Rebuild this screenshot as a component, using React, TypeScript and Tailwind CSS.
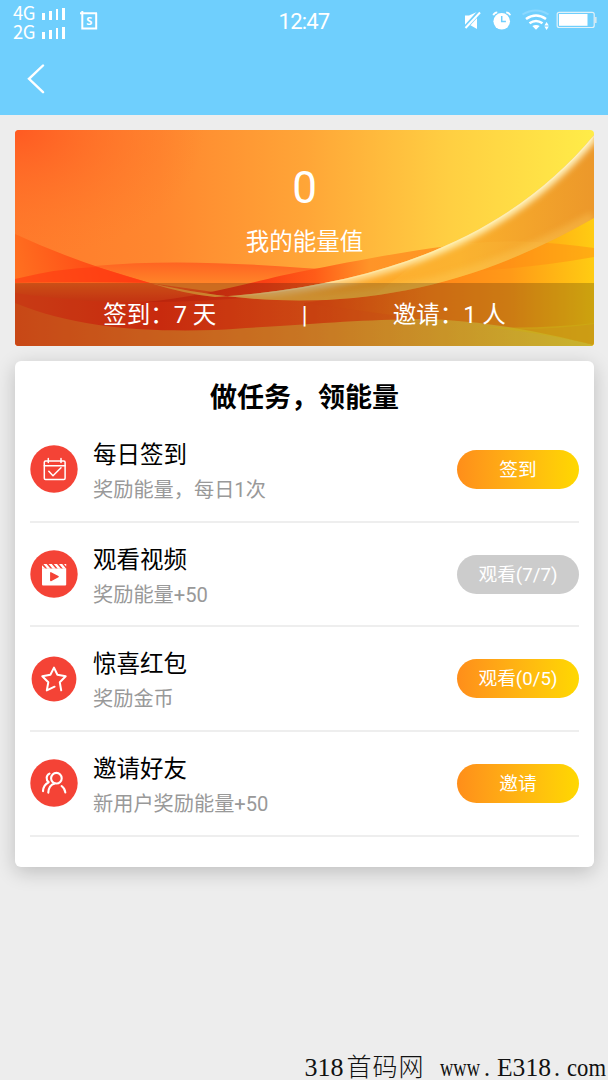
import type { ReactNode } from 'react';

const tasks = [
  { id: 'sign', title: '每日签到', desc: '奖励能量，每日1次', action: '签到', done: false, icon: <CalendarIcon /> },
  { id: 'video', title: '观看视频', desc: '奖励能量+50', action: '观看(7/7)', done: true, icon: <VideoIcon /> },
  { id: 'gift', title: '惊喜红包', desc: '奖励金币', action: '观看(0/5)', done: false, icon: <StarIcon /> },
  { id: 'invite', title: '邀请好友', desc: '新用户奖励能量+50', action: '邀请', done: false, icon: <FriendsIcon /> },
];

function IconCircle({ r = 23.7, children }: { r?: number; children: ReactNode }) {
  return (
    <svg viewBox="0 0 48 48" className="w-12 h-12 shrink-0" fill="none" stroke="#fff" strokeLinecap="round" strokeLinejoin="round">
      <circle cx="24" cy="24" r={r} fill="#f44336" stroke="none" />
      {children}
    </svg>
  );
}

function CalendarIcon() {
  return (
    <IconCircle>
      <g strokeWidth="1.5">
        <rect x="14.3" y="16" width="20.8" height="18.4" rx="1.2" />
        <path d="M14.3 20.8h20.8M18.3 13.5v4M31 13.5v4" />
        <path d="M18.8 26.2l4.2 4.5 8-8" />
      </g>
    </IconCircle>
  );
}

function VideoIcon() {
  return (
    <IconCircle>
      <g fill="#fff" stroke="none">
        <path d="M12 18.8v-3.6l3.6 3.6zM13.4 14h3.2l4 4.8h-3.2zM18.6 14h3.2l4 4.8h-3.2zM23.8 14H27l4 4.8h-3.2zM29 14h3.2l4 4.8H33zM34 14h2.2v2.6z" />
        <path d="M12 18.6h24.2v15.8a1 1 0 0 1-1 1H13a1 1 0 0 1-1-1z" />
      </g>
      <path d="M20.8 22.8v7.8l7.3-3.9z" fill="#f44336" stroke="#f44336" strokeWidth="1.4" />
    </IconCircle>
  );
}

function StarIcon() {
  return (
    <IconCircle r={22.4}>
      <path
        d="M24.6 31.7l-7.8 3.7 1.5-8.1-6-6 8.1-1.5L24 12.6l3.4 7.2 8.3 1.5-5.9 6 1.4 8"
        strokeWidth="2"
      />
    </IconCircle>
  );
}

function FriendsIcon() {
  return (
    <IconCircle>
      <g strokeWidth="2.1">
        <circle cx="26.4" cy="19.2" r="5.3" />
        <path d="M18.3 33.6c.2-4.8 2.8-8.2 6.4-9.2M31.6 27c2.2 1.6 3.4 3.8 3.7 6.5" />
        <path d="M19.5 14.6c-3.4 1.5-3.9 6.2-.8 8.6-3.6 1.8-5.5 4.6-5.7 8.9" />
      </g>
    </IconCircle>
  );
}

function Signal({ label }: { label: string }) {
  return (
    <div className="flex h-[19px] items-end gap-[5px]">
      <span className="w-[24px] text-[18.5px] leading-[19px] tracking-[-0.5px] font-['Noto_Sans_CJK_SC',sans-serif]">{label}</span>
      <span className="flex items-end gap-[4px] pb-[2px]">
        <i className="w-[3px] h-[7px] bg-white" />
        <i className="w-[3px] h-[9px] bg-white" />
        <i className="w-[2px] h-[11px] bg-white" />
        <i className="w-[3px] h-[12px] bg-white" />
      </span>
    </div>
  );
}

function StatusBar() {
  return (
    <div className="grid grid-cols-3 h-[43px] text-white">
      <div className="flex pl-[13px] pt-[3px]">
        <div className="w-[53px]">
          <Signal label="4G" />
          <Signal label="2G" />
        </div>
        <svg viewBox="0 0 18 20" className="ml-[14px] mt-[7px] w-[18px] h-5">
          <path d="M0 3.3h17M2.3 1v17.5h13.9V3.3" fill="none" stroke="#fff" strokeWidth="2" />
          <text x="9.2" y="15" textAnchor="middle" fill="#fff" fontSize="11" fontWeight="700" fontFamily="Open Sans, sans-serif">S</text>
        </svg>
      </div>
      <div className="text-center text-[22px] leading-[43px] tracking-[-0.8px]">12:47</div>
      <div className="flex justify-end pt-[8px] pr-[10px]">
        <svg viewBox="462 8 136 24" className="w-[136px] h-6 shrink-0" fill="none" stroke="#fff">
          <path d="M465 15.5h4l8-3.5v17l-7-4h-5z" fill="#fff" stroke="none" />
          <path d="M465 28L479.5 12" stroke="#6fcffd" strokeWidth="4.4" />
          <path d="M465.5 28L480 12.5" strokeWidth="2" />
          <circle cx="501.7" cy="21.3" r="8.3" fill="#fff" stroke="none" />
          <path d="M501.7 16v5.6h4.2" stroke="#6fcffd" strokeWidth="1.5" />
          <path d="M493.3 15.2q1-2.6 4-2.9M510.2 15.2q-1-2.6-4-2.9" strokeWidth="1.8" />
          <path d="M522.5 14.5q13.5-8 26 0" stroke="#8ad8ff" strokeWidth="2" />
          <path d="M526 19q10-7 20 0" strokeWidth="2.6" />
          <path d="M529.5 23.3q6.5-4.6 13 0" strokeWidth="2.6" />
          <path d="M532.3 26q3.7-2 7.4 0l-3.7 3.8z" fill="#fff" stroke="none" />
          <path d="M546.6 22l2.2 3.5h-4.4zM546.6 30l2.2-3.5h-4.4z" fill="#fff" stroke="none" />
          <rect x="557.2" y="12.3" width="37" height="15.2" rx="2" strokeWidth="1.2" stroke="#e1f1f8" />
          <path d="M559 14h28.5v11.8H559z" fill="#fff" stroke="none" />
          <path d="M595.6 17v6" stroke="#d5e8ef" strokeWidth="2" />
        </svg>
      </div>
    </div>
  );
}

function Waves() {
  return (
    <svg viewBox="0 0 579 216" preserveAspectRatio="none" className="absolute inset-0 w-full h-full">
      <defs>
        <linearGradient id="sky" x1="0" y1="0" x2="1" y2="0">
          <stop offset="0" stopColor="#ff7a2b" />
          <stop offset=".25" stopColor="#ff872f" />
          <stop offset=".5" stopColor="#ffa537" />
          <stop offset=".75" stopColor="#ffcf42" />
          <stop offset="1" stopColor="#ffec48" />
        </linearGradient>
        <radialGradient id="corner" cx="0" cy="0" r="1" gradientUnits="userSpaceOnUse" gradientTransform="scale(190 130)">
          <stop offset="0" stopColor="#ff5a22" />
          <stop offset="1" stopColor="#ff7a2b" stopOpacity="0" />
        </radialGradient>
        <linearGradient id="ribbon" x1="0" y1="0" x2="1" y2="0">
          <stop offset="0" stopColor="#fb4a1a" />
          <stop offset=".25" stopColor="#fb3512" />
          <stop offset=".5" stopColor="#ff5a18" />
          <stop offset=".7" stopColor="#ff8418" />
          <stop offset="1" stopColor="#ffc212" />
        </linearGradient>
        <linearGradient id="mound" x1="0" y1="132" x2="0" y2="156" gradientUnits="userSpaceOnUse">
          <stop offset="0" stopColor="#ff6322" />
          <stop offset="1" stopColor="#ff8829" />
        </linearGradient>
        <linearGradient id="slope" x1="0" y1="140" x2="110" y2="110" gradientUnits="userSpaceOnUse">
          <stop offset="0" stopColor="#ff7020" />
          <stop offset=".7" stopColor="#ff4c16" />
          <stop offset="1" stopColor="#ff4214" />
        </linearGradient>
        <linearGradient id="dip" x1="0" y1="150" x2="0" y2="172" gradientUnits="userSpaceOnUse">
          <stop offset="0" stopColor="#ff6a1e" />
          <stop offset="1" stopColor="#f54016" />
        </linearGradient>
        <linearGradient id="crest" x1="130" y1="0" x2="470" y2="0" gradientUnits="userSpaceOnUse">
          <stop offset="0" stopColor="#e82c10" />
          <stop offset=".35" stopColor="#fa4014" />
          <stop offset=".5" stopColor="#ff5c18" />
          <stop offset=".66" stopColor="#ff9428" />
          <stop offset="1" stopColor="#ff9a20" />
        </linearGradient>
        <linearGradient id="east" x1="300" y1="0" x2="579" y2="0" gradientUnits="userSpaceOnUse">
          <stop offset="0" stopColor="#fb5014" />
          <stop offset=".4" stopColor="#ff8418" />
          <stop offset=".7" stopColor="#ff9a18" />
          <stop offset="1" stopColor="#ffcc12" />
        </linearGradient>
        <linearGradient id="arc" x1="135" y1="0" x2="579" y2="0" gradientUnits="userSpaceOnUse">
          <stop offset="0" stopColor="#ff8024" />
          <stop offset=".35" stopColor="#ffa42c" />
          <stop offset=".7" stopColor="#fbb02c" />
          <stop offset="1" stopColor="#ec982a" />
        </linearGradient>
        <linearGradient id="shore" x1="0" y1="0" x2="1" y2="0">
          <stop offset="0" stopColor="#fb5a1c" />
          <stop offset=".5" stopColor="#fb942c" />
          <stop offset="1" stopColor="#fce23a" />
        </linearGradient>
        <linearGradient id="glow" x1="200" y1="0" x2="579" y2="0" gradientUnits="userSpaceOnUse">
          <stop offset="0" stopColor="#ffe9b4" stopOpacity="0" />
          <stop offset=".15" stopColor="#ffe9b4" stopOpacity=".6" />
          <stop offset=".6" stopColor="#fff0b0" />
          <stop offset="1" stopColor="#fff4c4" />
        </linearGradient>
        <clipPath id="arcClip">
          <path d="M135 153Q170 164 200 167C380 155 500 100 579 5V88C440 168 300 190 135 153z" />
        </clipPath>
        <filter id="soft" x="-10%" y="-10%" width="120%" height="120%">
          <feGaussianBlur stdDeviation="3.2" />
        </filter>
      </defs>
      <rect width="579" height="216" fill="url(#sky)" />
      <rect width="300" height="216" fill="url(#corner)" />
      {/* red mound and the slope crossing it */}
      <path d="M0 149C90 127 195 131 289 138Q350 142 399 142V190H0z" fill="url(#mound)" />
      <path d="M0 104Q60 132 135 153L220 172V190H0z" fill="url(#slope)" />
      <path d="M0 149Q45 138 82 137L135 153Q60 151 0 153z" fill="#ff3c12" opacity=".65" />
      <path d="M0 154Q60 151 135 153L220 165V190H0z" fill="url(#dip)" />
      {/* long ribbon along the bottom */}
      <path d="M0 163C90 177 160 173 240 162Q289 150 320 165L579 158V216H0z" fill="url(#ribbon)" />
      <path d="M130 172C190 167 250 148 289 141C350 129 440 111 502 111L420 150L289 160Q220 172 130 172z" fill="url(#crest)" />
      {/* warm area under the sweep on the right */}
      <path d="M289 173Q440 150 502 111L579 80V216H289z" fill="url(#east)" />
      <path d="M500 111Q545 113 579 118V127Q489 143 399 142z" fill="#ff8a14" opacity=".45" />
      <path d="M289 173L406 189Q489 206 579 194V216H289z" fill="#fb5a1c" opacity=".3" />
      {/* glowing sweep */}
      <path d="M135 153Q170 164 200 167C380 155 500 100 579 5V88C440 168 300 190 135 153z" fill="url(#arc)" />
      <g clipPath="url(#arcClip)">
        <path d="M422 117Q502 105 579 118V180H340z" fill="#ffd050" opacity=".12" />
        <path d="M200 167C380 155 500 100 579 5" fill="none" stroke="url(#glow)" strokeWidth="10" filter="url(#soft)" />
        <path d="M579 88C440 168 300 190 135 153" fill="none" stroke="#ffd060" strokeWidth="14" opacity=".35" filter="url(#soft)" />
        <path d="M200 167C380 155 500 100 579 5" fill="none" stroke="url(#glow)" strokeWidth="3" opacity=".6" />
      </g>
      {/* lower shore */}
      <path d="M0 173C60 198 130 202 200 200C300 194 340 190 406 189C470 190 530 203 579 215V216H0z" fill="url(#shore)" />
      <path d="M456 196Q520 200 579 193V215Q515 200 456 196z" fill="#ffd81c" opacity=".6" />
    </svg>
  );
}

function EnergyCard() {
  return (
    <section className="relative ml-[15px] mr-[14px] mt-[15px] h-[216px] shrink-0 overflow-hidden rounded text-white">
      <Waves />
      <div className="relative flex h-full flex-col items-center">
        <div className="mt-[30px] h-[56px] text-[44px] leading-[56px]">0</div>
        <div className="mt-[7px] h-9 text-[23.5px] leading-[38px]">我的能量值</div>
        <div className="mt-auto flex h-[63px] w-full items-center bg-black/20 text-[23.5px] leading-[36px]">
          <span className="flex-1 text-center">签到：7 天</span>
          <span className="w-0 flex justify-center">|</span>
          <span className="flex-1 text-center">邀请：1 人</span>
        </div>
      </div>
    </section>
  );
}

function TaskCard() {
  return (
    <section className="ml-[15px] mr-[14px] mt-[15px] h-[506px] shrink-0 rounded-md bg-white px-[15px] shadow-[0_5px_20px_rgba(0,0,0,0.2)]">
      <h2 className="h-[57px] pt-[17px] text-center text-[27px] leading-[40px] font-bold text-black">做任务，领能量</h2>
      <ul>
        {tasks.map((task) => (
          <li key={task.id} className="flex h-[104.7px] items-center border-b-2 border-[#eeeeee]">
            {task.icon}
            <div className="ml-[15px] flex-1 pt-[5px]">
              <div className="h-[36px] text-[23.5px] leading-[37px] text-black">{task.title}</div>
              <div className="h-[34px] text-[20.2px] leading-[34px] text-[#999999]">{task.desc}</div>
            </div>
            <button
              className={`h-[39px] w-[122px] rounded-full pt-[2px] text-[18.7px] leading-[37px] text-white ${
                task.done ? 'bg-[#cccccc]' : 'bg-linear-to-r from-[#ff8e1a] to-[#ffd800]'
              }`}
            >
              {task.action}
            </button>
          </li>
        ))}
      </ul>
    </section>
  );
}

const domainParts = [
  { text: '318', x: 304.5, width: 39 },
  { text: 'www', x: 440, width: 40 },
  { text: '.', x: 484, width: 6 },
  { text: 'E318', x: 497, width: 54 },
  { text: '.', x: 554, width: 6 },
  { text: 'com', x: 567, width: 39 },
];

function Watermark() {
  return (
    <svg viewBox="0 1040 608 40" className="mt-auto h-10 w-full shrink-0" fill="#111">
      {domainParts.map((part) => (
        <text
          key={part.x}
          x={part.x}
          y="1076"
          fontSize="26"
          fontFamily="Liberation Serif, serif"
          textLength={part.width}
          lengthAdjust="spacingAndGlyphs"
        >
          {part.text}
        </text>
      ))}
      <text x="346.5" y="1076" fontSize="25" textLength="77" fontWeight="300" fontFamily="Noto Sans CJK SC, sans-serif">首码网</text>
    </svg>
  );
}

export default function App() {
  return (
    <div className="flex h-[1080px] w-[608px] flex-col overflow-hidden bg-[#ededed] font-[Roboto,'Noto_Sans_CJK_SC',sans-serif]">
      <header className="h-[115px] shrink-0 bg-[#6fcffd]">
        <StatusBar />
        <svg viewBox="0 0 18 30" className="ml-[27px] mt-[21px] h-[30px] w-[18px]">
          <path d="M16 1.5L2 14.8l14 13.4" fill="none" stroke="#fff" strokeWidth="2.4" strokeLinecap="round" />
        </svg>
      </header>
      <EnergyCard />
      <TaskCard />
      <Watermark />
    </div>
  );
}
